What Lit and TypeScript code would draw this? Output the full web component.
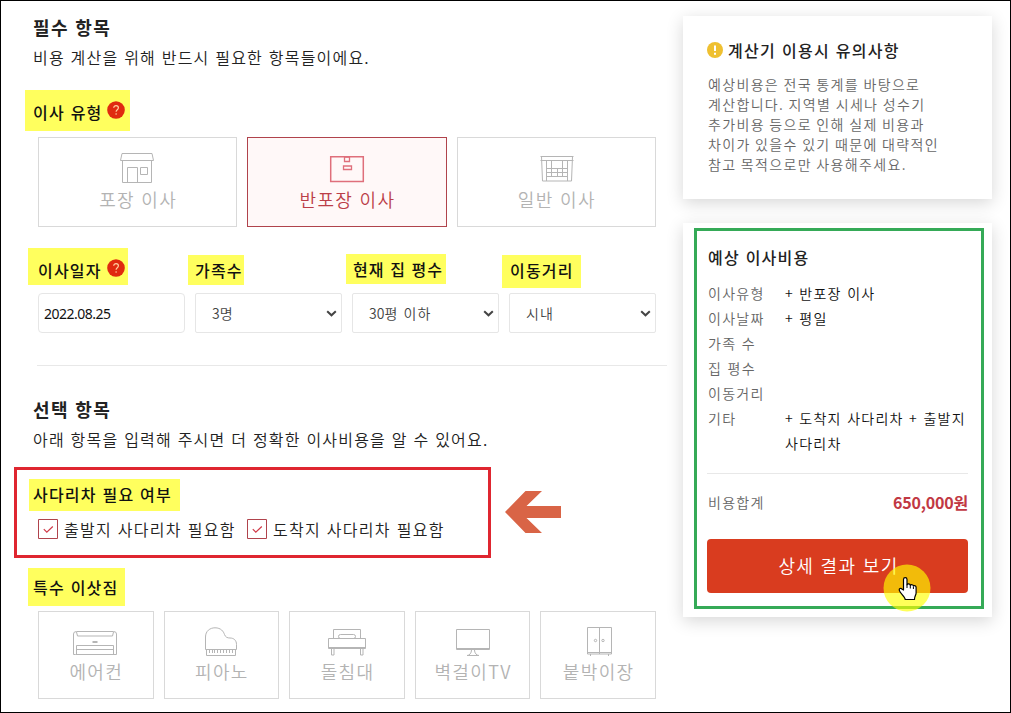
import { LitElement, css, html, svg } from 'lit'
import { customElement, property } from 'lit/decorators.js'
import { classMap } from 'lit/directives/class-map.js'

const icons = {
  shop: svg`
    <path d="M6.500 7.500 8 .5h30l1.500 7zM8.500 8v21.500h29V8" />
    <path d="M13.500 29.500v-15h10v15M26.500 14.500h7v7h-7z" />
  `,
  box: svg`
    <path stroke-width="1.500" d="M7.700 3.800h32.600v24.700H7.700z" />
    <path stroke-width="1.300" d="M21.500 4h5v4.500h-5zM20.500 13h8v3.500h-8z" />
  `,
  store: svg`
    <path d="M8.500 3.500h33M8.500 7.500h33M9.500 3.500l1 24.500h29l1-24.500M14.500 8v20M35.500 8v20" />
    <path d="M19.500 8v12M30.500 8v12M14.500 15.500h21M14.500 19.500h21M14.500 23.500h21M19.500 20v4M25.500 15v9M30.500 20v4" />
  `,
  aircon: svg`
    <path d="M3.500 27.500h-2V7q0-2.500 3-2.500h37q3 0 3 2.500v20.500zM4.500 5l1 4h35l1-4" />
    <path d="M4.500 27.500v-9h37v9M5 22.500h36" />
    <path stroke-width="2" d="M20.500 15h5" />
  `,
  piano: svg`
    <path d="M8.500 22.500V10C8.500 4 13 .8 18 .8c6 0 8.500 3.700 9.500 6.700 1 2.800 3 3.500 5.500 3.500 4 0 6.500 2.500 6.500 6.500v5z" />
    <path d="M9.500 22.500v6h29v-6M12.500 23v3M15.500 23v3M17.500 23v3M20.500 23v3M23.500 23v3M26.500 23v3M29.500 23v3M32.500 23v3M35.500 23v3" />
  `,
  bed: svg`
    <path d="M10.500 11.500v-9h27v9M17.500 7.500h13q2 0 2 2t-2 2h-13q-2 0-2-2t2-2z" />
    <path d="M5.500 11.500h37v10h-37zM5.500 20.500h37M8.500 22v6h2.500v-6M37.500 22v6h2.500v-6" />
  `,
  tv: svg`
    <path d="M7.500 2.500h33v20h-33zM7.500 21.500h33" />
    <path d="M22.500 23c0 3-2 5.500-4.500 5.500h12c-2.500 0-4.500-2.500-4.500-5.500" />
  `,
  closet: svg`
    <path d="M13.500.5h24v26.500h-24zM25.500.5v26.500M13.500 25.500h24M16.500 27v2M34.500 27v2" />
    <circle cx="21.500" cy="13.500" r="1.200" /><circle cx="29" cy="13.500" r="1.200" />
  `,
}

type IconName = keyof typeof icons

@customElement('option-card')
export class OptionCard extends LitElement {
  @property() icon: IconName = 'shop'
  @property() label = ''
  @property({ type: Boolean }) selected = false

  render() {
    return html`
      <div class=${classMap({ card: true, selected: this.selected })}>
        <svg width="48" height="31" viewBox="0 0 48 31">${icons[this.icon]}</svg>
        <span class="label">${this.label}</span>
      </div>
    `
  }

  static styles = css`
    :host {
      display: block;
    }

    .card {
      box-sizing: border-box;
      height: 100%;
      display: flex;
      flex-direction: column;
      align-items: center;
      padding-top: 15px;
      border: 1px solid #d9d9d9;
      background: #fff;
      color: #b3b3b3;
    }

    .card.selected {
      border-color: #b0434c;
      background: #fff8f8;
      color: #bb3e48;
    }

    svg {
      flex: none;
      fill: none;
      stroke: #b5b5b5;
      stroke-width: 1;
    }

    .selected svg {
      stroke: #df6f7b;
    }

    .label {
      margin-top: var(--label-gap, 2px);
      padding-left: 1px;
      font-size: 18px;
      font-weight: 350;
      line-height: 27px;
      letter-spacing: 0.075em;
      word-spacing: 1px;
      white-space: nowrap;
    }
  `
}

@customElement('cost-summary')
export class CostSummary extends LitElement {
  rows = [
    ['이사유형', '+ 반포장 이사'],
    ['이사날짜', '+ 평일'],
    ['가족 수', ''],
    ['집 평수', ''],
    ['이동거리', ''],
    ['기타', '+ 도착지 사다리차 + 출발지 사다리차'],
  ]

  render() {
    return html`
      <section class="panel">
        <div class="frame">
          <h3>예상 이사비용</h3>
          <dl>
            ${this.rows.map(([name, value]) => html`<dt>${name}</dt><dd>${value}</dd>`)}
          </dl>
          <div class="total">
            <span>비용합계</span>
            <strong>650,000원</strong>
          </div>
          <div class="button">
            상세 결과 보기
            <svg class="pointer" width="48" height="48" viewBox="0 0 48 48">
              <circle cx="24" cy="24" r="23.500" fill="#ffff00" fill-opacity=".65" />
              <path
                d="M20.500 26V15.500c0-2.500 3.500-2.500 3.500 0v5.300c.5-1.300 3-1.100 3.300.5.800-1 2.900-.7 3.100.7 1-.8 2.700-.3 2.700 1.500V29c0 2-1.600 3-1.600 6.500h-9.300c0-2.500-4.900-6-5.900-9.100-.5-1.500 1.300-2.800 2.600-1.400z"
                fill="#fff" stroke="#000" stroke-width="1.200" stroke-linejoin="round"
              />
              <path d="M24 20.500V24M27.300 21.500V24.500M30.400 22.500V25" stroke="#000" />
            </svg>
          </div>
        </div>
      </section>
    `
  }

  static styles = css`
    :host {
      display: block;
      color: #222;
    }

    .panel {
      box-sizing: border-box;
      height: 394px;
      padding: 5px 8px 8px 11px;
      background: #fff;
      box-shadow: 0 4px 16px rgba(0, 0, 0, 0.16);
    }

    .frame {
      box-sizing: border-box;
      height: 381px;
      padding: 12px 13px 0 10px;
      border: 3px solid #35aa57;
    }

    h3, dl, dd {
      margin: 0;
    }

    h3 {
      padding-left: 1px;
      font-size: 16px;
      font-weight: 500;
      line-height: 28px;
      letter-spacing: 0.075em;
      word-spacing: 1px;
    }

    dl {
      display: grid;
      grid-template-columns: 78px 1fr;
      grid-auto-rows: minmax(25px, auto);
      margin-top: 10px;
      padding-bottom: 17px;
      border-bottom: 1px solid #e8e8e8;
      font-size: 14px;
      line-height: 25px;
      letter-spacing: 0.09em;
      font-weight: 350;
    }

    dt {
      padding-left: 1px;
      color: #666;
    }

    dd {
      color: #111;
      margin-right: -6px;
    }

    .total {
      display: flex;
      justify-content: space-between;
      align-items: center;
      height: 56px;
      padding-left: 1px;
      font-size: 14px;
      font-weight: 350;
      letter-spacing: 0.09em;
      color: #666;
    }

    .total strong {
      font-size: 16px;
      font-weight: 700;
      letter-spacing: -0.2px;
      color: #c13843;
    }

    .button {
      position: relative;
      height: 54px;
      margin-top: 9px;
      border-radius: 4px;
      background: #d93c1f;
      color: #fff;
      font-size: 18px;
      font-weight: 350;
      line-height: 53px;
      letter-spacing: 0.075em;
      word-spacing: 1px;
      text-align: center;
      text-indent: 2px;
    }

    .pointer {
      position: absolute;
      left: 176px;
      top: 25px;
      fill: none;
    }
  `
}

@customElement('app-root')
export class AppRoot extends LitElement {
  moveTypes: { icon: IconName; label: string; selected?: boolean }[] = [
    { icon: 'shop', label: '포장 이사' },
    { icon: 'box', label: '반포장 이사', selected: true },
    { icon: 'store', label: '일반 이사' },
  ]

  luggage: { icon: IconName; label: string }[] = [
    { icon: 'aircon', label: '에어컨' },
    { icon: 'piano', label: '피아노' },
    { icon: 'bed', label: '돌침대' },
    { icon: 'tv', label: '벽걸이TV' },
    { icon: 'closet', label: '붙박이장' },
  ]

  help() {
    return html`
      <svg class="help" width="18" height="18" viewBox="0 0 18 18">
        <circle cx="9" cy="9" r="8.800" fill="#e02a10" />
        <path d="M6.700 6.800c0-3 4.700-3 4.700 0 0 2-2.300 1.800-2.300 4" fill="none" stroke="#ffd0a0" stroke-width="1.200" />
        <circle cx="9.100" cy="13" r=".8" fill="#ffd0a0" />
      </svg>
    `
  }

  select(digits: string, text: string) {
    return html`
      <div class="field select">
        <span><span class="digits">${digits}</span>${text}</span>
        <svg width="11" height="7" viewBox="0 0 11 7">
          <path d="M1.200 1.200 5.500 5.300 9.800 1.200" fill="none" stroke="#444" stroke-width="2" />
        </svg>
      </div>
    `
  }

  check(label: string) {
    return html`
      <div class="check">
        <svg width="20" height="20" viewBox="0 0 20 20">
          <path d="M.5.5h19v19H.5z" fill="#fff" stroke="#b0434c" />
          <path d="M5.800 10.200 8.800 13.200 14.800 7.500" fill="none" stroke="#d03a48" stroke-width="1.200" />
        </svg>
        <span>${label}</span>
      </div>
    `
  }

  render() {
    return html`
      <main>
        <h2>필수 항목</h2>
        <p>비용 계산을 위해 반드시 필요한 항목들이에요.</p>

        <div class="mark mark-type">이사 유형${this.help()}</div>
        <div class="types">
          ${this.moveTypes.map((t) => html`
            <option-card .icon=${t.icon} .label=${t.label} .selected=${!!t.selected}></option-card>
          `)}
        </div>

        <div class="labels">
          <div class="mark mark-date">이사일자${this.help()}</div>
          <div class="mark mark-family">가족수</div>
          <div class="mark mark-size">현재 집 평수</div>
          <div class="mark mark-distance">이동거리</div>
        </div>
        <div class="fields">
          <div class="field date">2022.08.25</div>
          ${this.select('3', '명')}
          ${this.select('30', '평 이하')}
          ${this.select('', '시내')}
        </div>

        <hr>

        <h2>선택 항목</h2>
        <p>아래 항목을 입력해 주시면 더 정확한 이사비용을 알 수 있어요.</p>

        <div class="ladder-row">
          <div class="ladder">
            <div class="mark mark-ladder">사다리차 필요 여부</div>
            <div class="checks">
              ${this.check('출발지 사다리차 필요함')}
              ${this.check('도착지 사다리차 필요함')}
            </div>
          </div>
          <svg class="arrow" width="56" height="43" viewBox="0 0 56 43">
            <path d="M0 21 20.500 0H37L21.500 15H56v12H21.500L37 42H20.500z" fill="#d96446" />
          </svg>
        </div>

        <div class="mark mark-luggage">특수 이삿짐</div>
        <div class="luggage">
          ${this.luggage.map((l) => html`
            <option-card .icon=${l.icon} .label=${l.label}></option-card>
          `)}
        </div>
      </main>

      <aside>
        <section class="notice">
          <h3>
            <svg width="16" height="16" viewBox="0 0 16 16">
              <circle cx="8" cy="8" r="8" fill="#efc030" />
              <path d="M8 3.500v5.500M8 10.800v2" stroke="#fff" stroke-width="2" />
            </svg>
            계산기 이용시 유의사항
          </h3>
          <div class="text">
            예상비용은 전국 통계를 바탕으로<br>
            계산합니다. 지역별 시세나 성수기<br>
            추가비용 등으로 인해 실제 비용과<br>
            차이가 있을수 있기 때문에 대략적인<br>
            참고 목적으로만 사용해주세요.
          </div>
        </section>
        <cost-summary></cost-summary>
      </aside>
    `
  }

  static styles = css`
    :host {
      box-sizing: border-box;
      display: flex;
      justify-content: space-between;
      width: 1011px;
      height: 713px;
      overflow: hidden;
      border: 1px solid #000;
      background: #fff;
      color: #222;
      font-family: "Noto Sans CJK KR", "Noto Sans", sans-serif;
      font-size: 16px;
      word-spacing: 1px;
    }

    main {
      width: 666px;
      padding-top: 11px;
    }

    h2, h3, p {
      margin: 0;
    }

    h2, main p {
      padding-left: 32px;
      line-height: 30px;
    }

    h2 {
      font-size: 18px;
      font-weight: 700;
      letter-spacing: 0.075em;
    }

    p {
      font-weight: 350;
      letter-spacing: 0.075em;
    }

    .mark {
      box-sizing: border-box;
      display: flex;
      width: max-content;
      background: #ffff5e;
      color: #111;
      font-weight: 500;
      line-height: 24px;
      letter-spacing: 0.075em;
      white-space: nowrap;
    }

    .help {
      margin: 1px 0 0 5px;
    }

    .mark-type {
      width: 105px;
      height: 41px;
      margin: 18px 0 0 24px;
      padding: 10px 0 0 8px;
    }

    .types, .labels, .fields, .luggage {
      display: grid;
      column-gap: 10px;
      width: 618px;
      margin-left: 37px;
    }

    .types {
      grid-template-columns: repeat(3, 1fr);
      height: 90px;
      margin-top: 6px;
    }

    .labels, .fields {
      grid-template-columns: repeat(4, 1fr);
    }

    .labels {
      align-items: start;
      height: 40px;
      margin-top: 21px;
    }

    .mark-date {
      width: 100px;
      height: 37px;
      margin-left: -10px;
      padding: 10px 0 0 10px;
    }

    .mark-family {
      width: 56px;
      height: 30px;
      margin: 7px 0 0 -7px;
      padding: 3px 0 0 7px;
    }

    .mark-size {
      width: 100px;
      height: 30px;
      margin: 6px 0 0 -6px;
      padding: 3px 0 0 7px;
      letter-spacing: 0.065em;
    }

    .mark-distance {
      width: 79px;
      height: 33px;
      margin: 7px 0 0 -7px;
      padding: 3px 0 0 8px;
    }

    .fields {
      height: 40px;
      margin-top: 5px;
    }

    .field {
      box-sizing: border-box;
      display: flex;
      align-items: center;
      border: 1px solid #e6e6e6;
      border-radius: 2px;
      background: #fff;
      font-size: 14px;
      font-weight: 350;
      letter-spacing: 0.08em;
    }

    .date {
      padding-left: 5px;
      border-radius: 4px;
      color: #111;
      font-family: "Noto Sans", sans-serif;
      font-weight: 400;
      letter-spacing: -0.500px;
    }

    .select {
      justify-content: space-between;
      padding: 0 4px 0 16px;
      color: #444;
    }

    .digits {
      letter-spacing: 0;
    }

    hr {
      width: 630px;
      height: 1px;
      margin: 32px 0 28px 36px;
      border: 0;
      background: #e8e8e8;
    }

    .ladder-row {
      display: flex;
      align-items: center;
      gap: 14px;
      margin: 13px 0 0 13px;
    }

    .ladder {
      box-sizing: border-box;
      width: 477px;
      height: 91px;
      padding: 9px 0 0 12px;
      border: 3px solid #df2630;
    }

    .mark-ladder {
      width: 151px;
      height: 32px;
      padding: 3px 0 0 4px;
    }

    .checks {
      display: flex;
      height: 36px;
      padding-left: 9px;
    }

    .check {
      display: flex;
      align-items: center;
      gap: 6px;
      width: 209px;
      font-weight: 350;
      letter-spacing: 0.08em;
      white-space: nowrap;
    }

    .check svg {
      flex: none;
    }

    .mark-luggage {
      width: 97px;
      height: 38px;
      margin: 10px 0 0 27px;
      padding: 7px 0 0 5px;
    }

    .luggage {
      --label-gap: 0;
      grid-template-columns: repeat(5, 1fr);
      height: 88px;
      margin-top: 5px;
    }

    aside {
      width: 309px;
      padding: 15px 18px 0 0;
    }

    .notice {
      box-sizing: border-box;
      height: 183px;
      margin-bottom: 24px;
      padding: 21px 0 0 24px;
      background: #fff;
      box-shadow: 0 4px 16px rgba(0, 0, 0, 0.16);
    }

    .notice h3 {
      display: flex;
      align-items: center;
      gap: 5px;
      font-size: 16px;
      font-weight: 500;
      line-height: 26px;
      letter-spacing: 0.08em;
    }

    .text {
      margin: 11px 0 0 1px;
      color: #666;
      font-size: 14px;
      font-weight: 350;
      line-height: 20px;
      letter-spacing: 0.095em;
      word-spacing: 0;
    }
  `
}
